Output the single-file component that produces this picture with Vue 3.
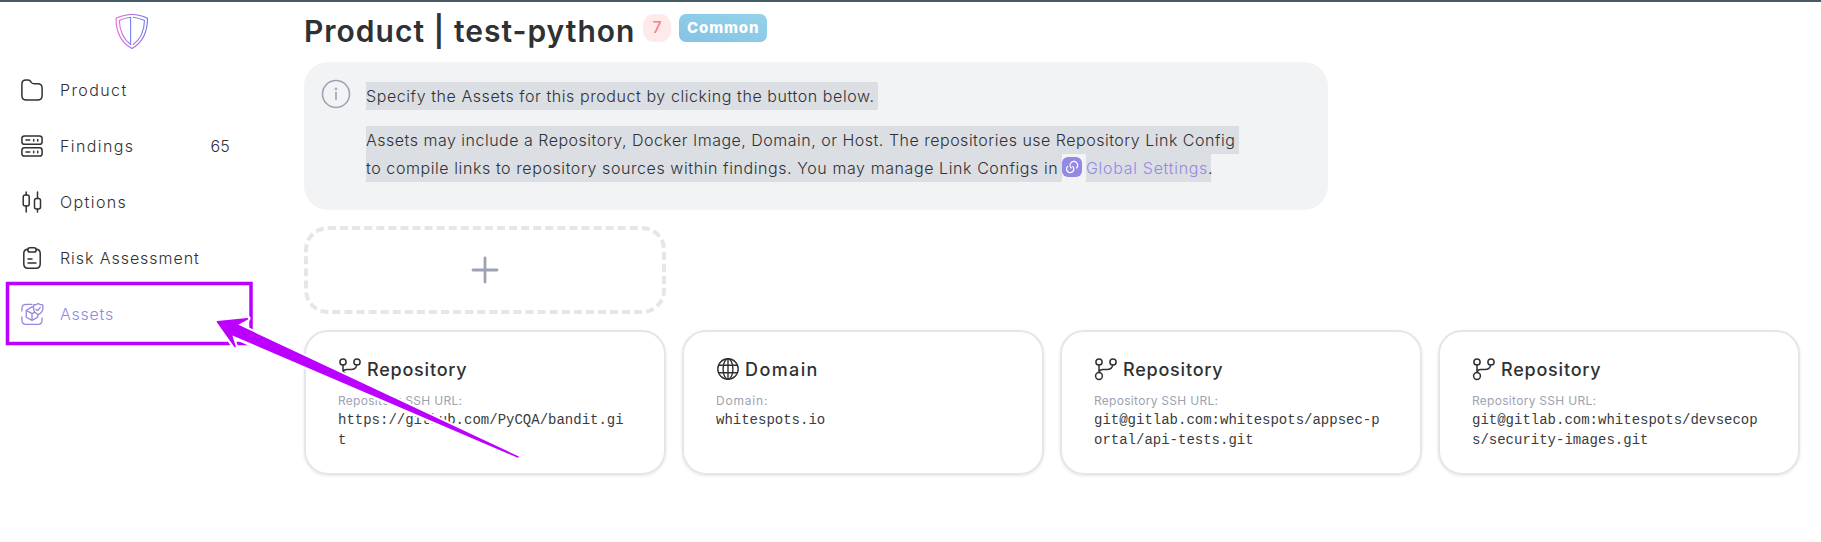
<script setup>
const menu = [
  { key: 'product', label: 'Product' },
  { key: 'findings', label: 'Findings', count: 65 },
  { key: 'options', label: 'Options' },
  { key: 'risk', label: 'Risk Assessment' },
  { key: 'assets', label: 'Assets', active: true },
]

const assets = [
  { type: 'Repository', label: 'Repository SSH URL:', value: 'https://github.com/PyCQA/bandit.git' },
  { type: 'Domain', label: 'Domain:', value: 'whitespots.io' },
  { type: 'Repository', label: 'Repository SSH URL:', value: 'git@gitlab.com:whitespots/appsec-portal/api-tests.git' },
  { type: 'Repository', label: 'Repository SSH URL:', value: 'git@gitlab.com:whitespots/devsecops/security-images.git' },
]
</script>

<template>
  <div class="page">
    <aside class="sidebar">
      <div class="logo">
        <svg width="34" height="37" viewBox="0 0 34 37" fill="none" stroke-width="1.1" stroke-linejoin="round">
          <defs>
            <linearGradient id="outer" x1="0" y1="0" x2="34" y2="0" gradientUnits="userSpaceOnUse">
              <stop offset="0" stop-color="#f263d2" />
              <stop offset="1" stop-color="#6672f3" />
            </linearGradient>
            <linearGradient id="left" x1="4" y1="0" x2="16" y2="0" gradientUnits="userSpaceOnUse">
              <stop offset="0" stop-color="#ee66d8" />
              <stop offset="1" stop-color="#6f83f6" />
            </linearGradient>
            <linearGradient id="right" x1="17" y1="34" x2="30" y2="6" gradientUnits="userSpaceOnUse">
              <stop offset="0" stop-color="#e268df" />
              <stop offset="0.6" stop-color="#7378f3" />
              <stop offset="1" stop-color="#7b78f2" />
            </linearGradient>
          </defs>
          <path d="M1 5.2Q9.5 1.5 17 1.5T32.5 5.2C32.5 20 27.500 29.500 17 35.500C6 29.500 1 20 1 5.200Z" stroke="url(#outer)" />
          <path d="M15.600 4.300Q9.500 5 4.300 7.400C4.700 18 8.500 26 15.600 31.500Z" stroke="url(#left)" />
          <path d="M17.800 4.300Q24 5 29.500 7.400C29.200 18 25.500 26.500 17.800 31.800" stroke="url(#right)" />
        </svg>
      </div>
      <nav class="menu">
        <a v-for="m in menu" :key="m.key" class="item" :class="[m.key, { active: m.active }]">
          <svg class="glyph" width="24" height="24" viewBox="0 0 24 24" fill="none" stroke="currentColor" stroke-width="1.5" stroke-linecap="round" stroke-linejoin="round">
            <path v-if="m.key === 'product'" d="M1.900 17.500V6Q1.900 1.900 6 1.900H7.700Q9.300 1.900 10.300 3.100L11.500 4.600Q12.500 5.800 14 5.800H17.500Q22.100 5.800 22.100 10V17.500Q22.100 22.100 17.500 22.100H6.500Q1.900 22.100 1.900 17.500Z" />
            <g v-else-if="m.key === 'findings'">
              <rect x="1.900" y="1.900" width="20.200" height="8.400" rx="2.600" />
              <rect x="1.900" y="13.700" width="20.200" height="8.400" rx="2.600" />
              <path d="M6 6.100H9.700M13.700 5.400V6.900M17.700 5.400V6.900M6 17.900H9.700M13.700 17.200V18.700M17.700 17.200V18.700" />
            </g>
            <g v-else-if="m.key === 'options'">
              <rect x="3.200" y="5" width="6" height="11" rx="2" />
              <rect x="14.500" y="8.500" width="6" height="10.500" rx="2" />
              <path d="M6.200 1.900V5M6.200 16V22.100M17.500 1.900V8.500M17.500 19V22.100" />
            </g>
            <g v-else-if="m.key === 'risk'">
              <path d="M8 3.200Q3.800 3.200 3.800 7.500V18Q3.800 22.200 8 22.200H16Q20.200 22.200 20.200 18V7.500Q20.200 3.200 16 3.200" />
              <rect x="7.800" y="1.700" width="8.400" height="4.400" rx="2.200" />
              <path d="M8 13H12M8 17H16" />
            </g>
            <g v-else stroke-width="1.300">
              <path d="M1.900 9V6.500Q1.900 2.300 6 2.300H12M1.900 15V18Q1.900 22.300 6 22.300H18Q22.100 22.300 22.100 18V16" />
              <path d="M13.500 5.300L12 4.900L6.300 8.200V15.200L12 18.400L17.700 15.200V12.700M6.500 8.500L12 11.600L14.500 10.300M12 11.600V18.200" />
              <path d="M18.200 1.600Q20 3 22.800 3V6.800Q22.500 10.800 18.200 12.600Q13.900 10.800 13.600 6.800V3Q16.400 3 18.200 1.600Z" />
              <path d="M16 7.200L17.500 8.600L20.300 5.400" />
            </g>
          </svg>
          <span class="text">{{ m.label }}</span>
          <span v-if="m.count" class="count">{{ m.count }}</span>
        </a>
      </nav>
    </aside>

    <main class="main">
      <header class="header">
        <h1>Product | test-python</h1>
        <span class="badge">7</span>
        <span class="tag">Common</span>
      </header>

      <section class="info">
        <svg class="info-icon" width="30" height="30" viewBox="0 0 30 30" fill="none" stroke="#9ca3b3" stroke-width="1.600" stroke-linecap="round">
          <circle cx="15" cy="15" r="13.500" />
          <path d="M15 13.200V20.200" />
          <circle cx="15" cy="9.700" r="0.500" fill="#9ca3b3" />
        </svg>
        <div class="copy">
          <p><span class="line one">Specify the Assets for this product by clicking the button below.</span></p>
          <p>
            <span class="line two">Assets may include a Repository, Docker Image, Domain, or Host. The repositories use Repository Link Config</span>
            <span class="row">
              <span class="line three">to compile links to repository sources within findings. You may manage Link Configs in</span>
              <svg class="link-icon" width="20" height="20" viewBox="0 0 20 20" fill="none">
                <rect width="20" height="20" rx="6" fill="#9389e2" />
                <g transform="translate(2.500 2.500) scale(0.630)" stroke="#fff" stroke-width="2" stroke-linecap="round">
                  <path d="M13.060 10.940C15.310 13.190 15.310 16.830 13.060 19.070C10.810 21.310 7.170 21.320 4.930 19.070C2.690 16.820 2.680 13.180 4.930 10.940" />
                  <path d="M10.590 13.410C8.250 11.070 8.250 7.270 10.590 4.920C12.930 2.570 16.730 2.580 19.080 4.920C21.430 7.260 21.420 11.060 19.080 13.410" />
                </g>
              </svg>
              <span class="line four"><a>Global Settings</a>.</span>
            </span>
          </p>
        </div>
      </section>

      <button class="add" type="button" aria-label="Add asset">
        <svg width="30" height="30" viewBox="0 0 30 30" stroke="#9ca3b3" stroke-width="2.800" stroke-linecap="round">
          <path d="M15 3V27M3 15H27" />
        </svg>
      </button>

      <section class="cards">
        <article v-for="(a, i) in assets" :key="i" class="card">
          <h2 :class="{ domain: a.type === 'Domain' }">
            <svg width="24" height="24" viewBox="0 0 24 24" fill="none" stroke="currentColor" stroke-width="1.500" stroke-linecap="round">
              <g v-if="a.type === 'Domain'" stroke-width="1.400">
                <circle cx="12" cy="12" r="10.200" />
                <ellipse cx="12" cy="12" rx="4.900" ry="10.200" />
                <path d="M12 1.800V22.200M3 8.200H21M3 15.800H21" />
              </g>
              <g v-else>
                <circle cx="5" cy="5" r="3.100" />
                <circle cx="19" cy="5" r="3.100" />
                <circle cx="5" cy="19" r="3.400" />
                <path d="M5 8.100V15.600M5.200 15.300C5.400 13 6.500 12.600 9 12.600H13C16.500 12.600 18.300 11 18.600 8.200" />
              </g>
            </svg>
            <span>{{ a.type }}</span>
          </h2>
          <div class="label" :class="{ domain: a.type === 'Domain' }">{{ a.label }}</div>
          <div class="value">{{ a.value }}</div>
        </article>
      </section>
    </main>

    <svg class="annotation" width="530" height="470" viewBox="0 0 530 470">
      <rect x="7.500" y="283.500" width="243.500" height="60" fill="none" stroke="#bb00ff" stroke-width="3.500" />
      <path class="halo" d="M217.500 321.500L247.500 318.500L236 324.800L518 457L230.500 334.500L235 346.500Z" />
      <path class="arrow" d="M217.500 321.800L247.500 318.800L236.500 324.800L518 457L231 334L235 346.500Z" />
    </svg>
  </div>
</template>

<style>
html,
body {
  margin: 0;
  background: #fff;
}
</style>

<style scoped>
.page {
  box-sizing: border-box;
  position: relative;
  display: flex;
  width: 1821px;
  height: 542px;
  overflow: hidden;
  border-top: 2px solid #455a64;
  background: #fff;
  color: #303133;
  font-family: Inter, 'Open Sans', sans-serif;
  font-size: 16px;
}
.sidebar {
  width: 304px;
  flex: none;
}
.logo {
  display: flex;
  height: 60px;
  padding: 11px 0 0 115px;
  box-sizing: border-box;
}
.item {
  display: flex;
  align-items: center;
  box-sizing: border-box;
  height: 56px;
  width: 252px;
  padding: 0 22px 0 20px;
  font-weight: 300;
  line-height: 27px;
}
.glyph {
  flex: none;
  margin-right: 16px;
}
.text {
  flex: 1;
  letter-spacing: 1.4px;
}
.item.risk .text {
  letter-spacing: 0.94px;
}
.item.assets .text {
  letter-spacing: 0.76px;
}
.count {
  letter-spacing: 0.2px;
}
.active {
  color: #9389e2;
}
.main {
  width: 1496px;
  flex: none;
}
.header {
  display: flex;
  align-items: flex-start;
  height: 60px;
  padding-top: 12px;
  box-sizing: border-box;
}
h1 {
  width: 339px;
  margin: 0;
  font-size: 30px;
  font-weight: 600;
  line-height: 34px;
  letter-spacing: 1px;
  white-space: nowrap;
}
.badge {
  width: 28px;
  height: 28px;
  border-radius: 11px;
  background: #ffeaeb;
  color: #fa7c8b;
  font-weight: 500;
  line-height: 27px;
  text-align: center;
}
.tag {
  box-sizing: border-box;
  width: 88px;
  height: 28px;
  margin-left: 8px;
  padding-left: 8px;
  border-radius: 7px;
  background: linear-gradient(15deg, #85c2e6, #94d3e9);
  color: #fff;
  font-size: 15px;
  font-weight: 800;
  line-height: 27px;
  letter-spacing: 0.9px;
}
.info {
  display: flex;
  box-sizing: border-box;
  width: 1024px;
  height: 148px;
  padding: 17px 0 0 17px;
  border-radius: 24px;
  background: #f2f3f5;
}
.info-icon {
  flex: none;
  margin-right: 15px;
}
.copy {
  padding-top: 3px;
  font-weight: 300;
  line-height: 28px;
}
.copy p {
  margin: 0 0 16px;
}
.line {
  display: block;
  height: 28px;
  background: #dbdee3;
  white-space: nowrap;
}
.one {
  width: 512px;
  letter-spacing: 0.57px;
}
.two {
  width: 873px;
  letter-spacing: 0.5px;
}
.row {
  display: flex;
}
.three {
  width: 696px;
  letter-spacing: 0.583px;
}
.link-icon {
  margin: 3px 4px 0 0;
}
.four {
  width: 125px;
  letter-spacing: 0.7px;
}
.four a {
  color: #9389e2;
}
.add {
  display: flex;
  align-items: center;
  justify-content: center;
  box-sizing: border-box;
  width: 362px;
  height: 88px;
  margin: 16px 0;
  padding: 0;
  border: 4px dashed #e5e6eb;
  border-radius: 24px;
  background: #fff;
}
.cards {
  display: grid;
  grid-template-columns: repeat(4, 362px);
  gap: 16px;
}
.card {
  box-sizing: border-box;
  height: 145px;
  padding: 26px 0 0 32px;
  border: 2px solid #e5e6eb;
  border-radius: 24px;
  box-shadow: 0 1px 3px rgba(0, 0, 0, 0.1);
}
h2 {
  display: flex;
  align-items: center;
  height: 22px;
  margin: 0;
  font-size: 18px;
  font-weight: 500;
  line-height: 22px;
  letter-spacing: 0.78px;
}
h2.domain {
  letter-spacing: 1.4px;
}
h2 svg {
  margin-right: 5px;
}
h2 span {
  position: relative;
  top: 1px;
}
.label {
  margin-top: 13px;
  color: #9ca3b3;
  font-size: 12px;
  line-height: 16px;
  letter-spacing: 0.29px;
}
.label.domain {
  letter-spacing: 0.8px;
}
.value {
  width: 290px;
  margin-top: 1px;
  color: #3a3b3e;
  font-family: 'Liberation Mono', monospace;
  font-size: 14px;
  line-height: 20px;
  word-break: break-all;
}
.annotation {
  position: absolute;
  top: -2px;
  left: 0;
}
.halo {
  fill: #fff;
  stroke: #fff;
  stroke-width: 6px;
  stroke-linejoin: round;
}
.arrow {
  fill: #bb00ff;
  stroke: #bb00ff;
  stroke-width: 1.6px;
  stroke-linejoin: round;
}
</style>
